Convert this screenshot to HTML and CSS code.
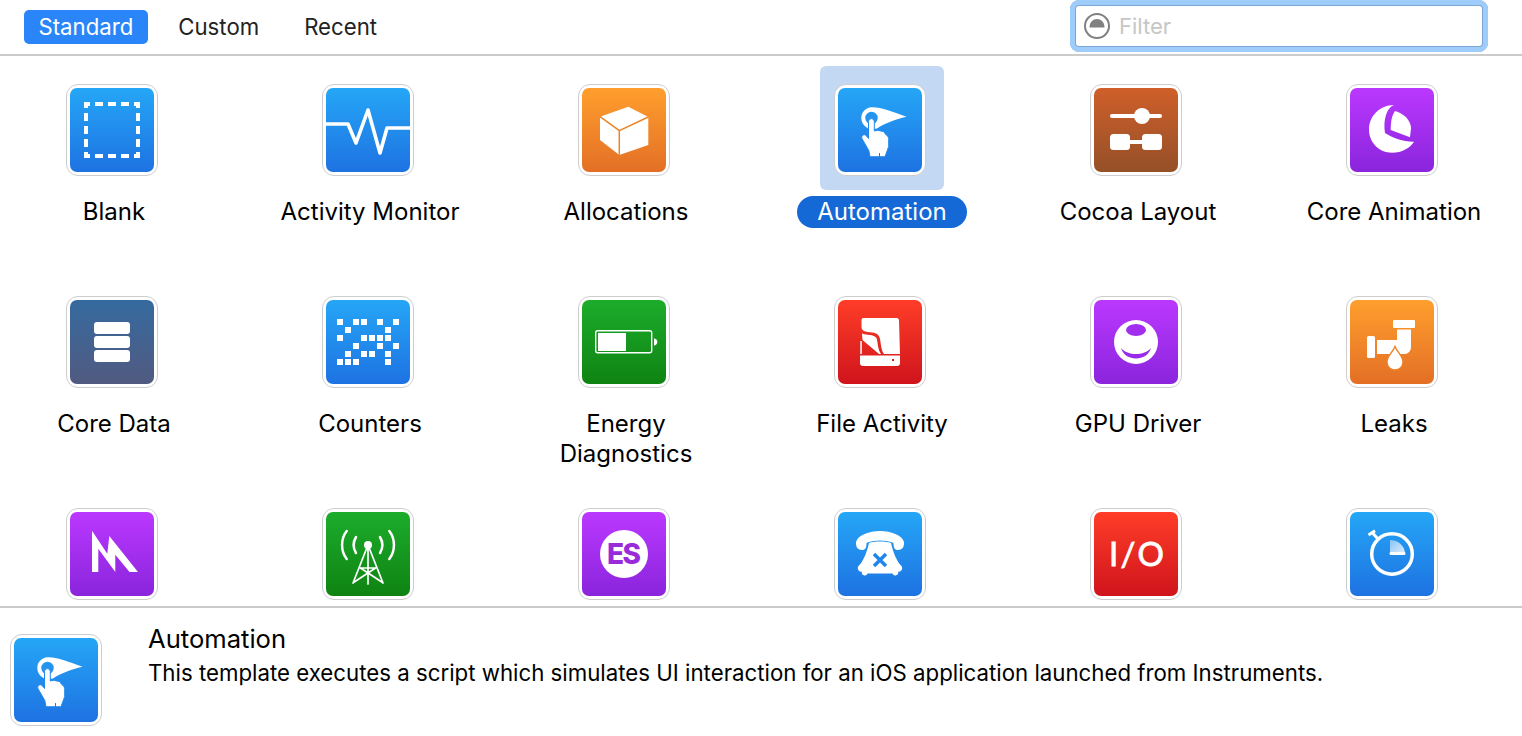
FILE: index.html
```html
<!DOCTYPE html>
<html lang="en">
<head>
<meta charset="utf-8">
<title>Instruments template chooser</title>
<link rel="stylesheet" href="styles.css">
</head>
<body>
<svg class="defs" width="0" height="0" aria-hidden="true">
  <symbol id="hand" viewBox="0 0 84 84">
    <path fill="#fff" fill-rule="evenodd" d="M33.500 19.300C43 19 55 24 68.500 28.700C57 31.500 47 35 39 40.500L34 41C28 41 23.300 36 23.300 30C23.300 24 28 19.500 33.500 19.300ZM33.500 23.800a6.200 6.200 0 1 0 0 12.400a6.200 6.200 0 1 0 0-12.400Z"/>
    <path fill="#fff" stroke="#1f8aee" stroke-width="1" d="M30.500 33.500a2.900 2.900 0 0 1 5.800 0V43l3.500-.8l3 .8l3 .5l1.500 2.500l2.700 2.500l.7 2V58.500L47 68.700H32L30.800 62.500L23.800 50.300c-.6-2 .8-3.600 2.600-3.600c1.600 0 4.100 3.800 4.100 3.800Z"/>
    <path stroke="#1f7ee8" stroke-width="1" d="M41.500 65V69"/>
  </symbol>
</svg>

<header class="toolbar">
  <nav class="tabs">
    <span class="tab tab-active">Standard</span>
    <span class="tab">Custom</span>
    <span class="tab">Recent</span>
  </nav>
  <div class="filter">
    <svg class="filter-icon" viewBox="0 0 28 28"><circle cx="14" cy="14" r="12" fill="none" stroke="#808080" stroke-width="2"/><path d="M6.500 15.500C6.500 10 10 7 14 7C18 7 21.500 10 21.500 15.500Z" fill="#808080"/></svg>
    <span class="filter-text">Filter</span>
  </div>
</header>

<main class="list">
  <div class="grid">
    <div class="cell"><div class="tile"><div class="icon"><div class="face blue">
      <svg viewBox="0 0 84 84"><rect x="16" y="16" width="52" height="52" fill="none" stroke="#fff" stroke-width="4" stroke-dasharray="8 5" stroke-dashoffset="4"/></svg>
    </div></div></div><div class="label">Blank</div></div>

    <div class="cell"><div class="tile"><div class="icon"><div class="face blue">
      <svg viewBox="0 0 84 84"><path d="M0 36H22L30 55L42 22L54 65L61 40H84" fill="none" stroke="#fff" stroke-width="3.600" stroke-linejoin="round" stroke-linecap="round"/></svg>
    </div></div></div><div class="label">Activity Monitor</div></div>

    <div class="cell"><div class="tile"><div class="icon"><div class="face orange">
      <svg viewBox="0 0 84 84"><path d="M46.300 18.700L66.300 29V57L37.300 67L18 52V28.700Z" fill="#fff"/><path d="M18 28.700L37.300 42.700L66.300 29M37.300 42.700V67" fill="none" stroke="#ea8427" stroke-width="1.500"/></svg>
    </div></div></div><div class="label">Allocations</div></div>

    <div class="cell"><div class="tile tile-selected"><div class="icon"><div class="face blue">
      <svg viewBox="0 0 84 84"><use href="#hand"/></svg>
    </div></div></div><div class="label label-selected">Automation</div></div>

    <div class="cell"><div class="tile"><div class="icon"><div class="face brown">
      <svg viewBox="0 0 84 84"><rect x="16" y="26" width="52" height="4" rx="2" fill="#fff"/><circle cx="48" cy="28" r="8" fill="#fff"/><rect x="16" y="46" width="20" height="16" rx="3.500" fill="#fff"/><rect x="48" y="46" width="20" height="16" rx="3.500" fill="#fff"/><rect x="36" y="52" width="12" height="4" fill="#fff"/></svg>
    </div></div></div><div class="label">Cocoa Layout</div></div>

    <div class="cell"><div class="tile"><div class="icon"><div class="face purple">
      <svg viewBox="0 0 84 84"><path fill="#fff" d="M44 17C36 20 33 33 35 45C43 50 54 54 64 53.700C60 60 52 64.700 42 64.700C29 64.700 19 54.500 19 41.500C19 28 30 17 44 17Z"/><path fill="#fff" d="M45 23C53 25 61 32 61 40.300L60 49.300L40.700 42C40.700 35 41.500 28 45 23Z"/></svg>
    </div></div></div><div class="label">Core Animation</div></div>

    <div class="cell"><div class="tile"><div class="icon"><div class="face navy">
      <svg viewBox="0 0 84 84"><rect x="24" y="22" width="36" height="12" rx="3" fill="#fff"/><rect x="24" y="36" width="36" height="12" rx="3" fill="#fff"/><rect x="24" y="50" width="36" height="12" rx="3" fill="#fff"/></svg>
    </div></div></div><div class="label">Core Data</div></div>

    <div class="cell"><div class="tile"><div class="icon"><div class="face blue">
      <svg viewBox="0 0 84 84" fill="#fff">
        <rect x="11" y="19" width="6" height="6"/><rect x="27" y="19" width="6" height="6"/><rect x="35" y="19" width="6" height="6"/><rect x="51" y="19" width="6" height="6"/><rect x="67" y="19" width="6" height="6"/>
        <rect x="19" y="27" width="6" height="6"/><rect x="59" y="27" width="6" height="6"/>
        <rect x="11" y="35" width="6" height="6"/><rect x="35" y="35" width="6" height="6"/><rect x="43" y="35" width="6" height="6"/><rect x="51" y="35" width="6" height="6"/><rect x="59" y="35" width="6" height="6"/>
        <rect x="27" y="43" width="6" height="6"/><rect x="51" y="43" width="6" height="6"/><rect x="67" y="43" width="6" height="6"/>
        <rect x="19" y="51" width="6" height="6"/><rect x="35" y="51" width="6" height="6"/><rect x="43" y="51" width="6" height="6"/><rect x="59" y="51" width="6" height="6"/>
        <rect x="11" y="59" width="6" height="6"/><rect x="19" y="59" width="6" height="6"/><rect x="27" y="59" width="6" height="6"/><rect x="59" y="59" width="6" height="6"/>
      </svg>
    </div></div></div><div class="label">Counters</div></div>

    <div class="cell"><div class="tile"><div class="icon"><div class="face green">
      <svg viewBox="0 0 84 84"><rect x="13.700" y="30.700" width="56" height="22" rx="2" fill="none" stroke="#fff" stroke-width="1.400"/><rect x="16" y="33" width="28" height="18" fill="#fff"/><path d="M72 38.300C74.500 39 75.300 40.500 75.300 42C75.300 43.500 74.500 45 72 45.700Z" fill="#fff"/></svg>
    </div></div></div><div class="label">Energy Diagnostics</div></div>

    <div class="cell"><div class="tile"><div class="icon"><div class="face red">
      <svg viewBox="0 0 84 84">
        <path fill="#fff" d="M25.500 18H58.500A2.500 2.500 0 0 1 61 20.500L62 54H46C43 50 43 44 42 39C41 33 36 32.500 30 32C26 31.700 23.500 30 23.500 27V20A2 2 0 0 1 25.500 18Z"/>
        <path fill="#fff" d="M24 33.500C28 35.500 36 34 38.500 38C40 42 39.500 49 43 54H41L24.500 40Z"/>
        <rect x="22.300" y="41" width="1.500" height="13" fill="#fff"/>
        <path fill="#fff" d="M22 55.500H62V63A3 3 0 0 1 59 66H25A3 3 0 0 1 22 63Z"/>
        <rect x="54" y="59" width="2" height="2" fill="#d81e20"/>
      </svg>
    </div></div></div><div class="label">File Activity</div></div>

    <div class="cell"><div class="tile"><div class="icon"><div class="face purple">
      <svg viewBox="0 0 84 84"><circle cx="42" cy="42" r="22" fill="#fff"/><ellipse cx="42" cy="30" rx="10" ry="6" fill="#a22ff0"/><path d="M27 48C31 62 53 62 57 48C50 56 34 56 27 48Z" fill="#9a2be8"/></svg>
    </div></div></div><div class="label">GPU Driver</div></div>

    <div class="cell"><div class="tile"><div class="icon"><div class="face orange">
      <svg viewBox="0 0 84 84"><rect x="43" y="20" width="22" height="8" rx="1" fill="#fff"/><path d="M47 29.500H61V47C61 51 58 54 55 54H27V40H47Z" fill="#fff"/><rect x="17" y="36" width="8" height="22" rx="1.500" fill="#fff"/><path d="M45 46.500C47 52 53 56 53 62C53 66.500 49.500 70 45 70C40.500 70 37 66.500 37 62C37 56 43 52 45 46.500Z" fill="#fff" stroke="#ec8228" stroke-width="1.400"/></svg>
    </div></div></div><div class="label">Leaks</div></div>

    <div class="cell"><div class="tile"><div class="icon"><div class="face purple">
      <svg viewBox="0 0 84 84"><path d="M22 18.700L37.300 41.700L39.300 24L68 60H59.500L45.300 42.700V60L28.300 36.700V60H22Z" fill="#fff"/></svg>
    </div></div></div></div>

    <div class="cell"><div class="tile"><div class="icon"><div class="face green">
      <svg viewBox="0 0 84 84"><circle cx="42" cy="33" r="4" fill="#fff"/><path d="M42 33L27 71M42 33L57 71M42 33V72M34.500 56H49.500M34.500 56L56.500 70.500M49.500 56L27.500 70.500" fill="none" stroke="#fff" stroke-width="1.700" stroke-linecap="round"/><path d="M30 25C27 30 27 36 30 41M54 25C57 30 57 36 54 41M20.700 19C14.500 27 14.500 39 20.700 47M63.300 19C69.500 27 69.500 39 63.300 47" fill="none" stroke="#fff" stroke-width="2.500" stroke-linecap="round"/></svg>
    </div></div></div></div>

    <div class="cell"><div class="tile"><div class="icon"><div class="face purple">
      <svg viewBox="0 0 84 84"><circle cx="42" cy="42" r="24" fill="#fff"/><text class="es-text" x="42" y="52" text-anchor="middle" textLength="34">ES</text></svg>
    </div></div></div></div>

    <div class="cell"><div class="tile"><div class="icon"><div class="face blue">
      <svg viewBox="0 0 84 84"><path fill="#fff" d="M18 30C20 23 31 19 42 19C53 19 64 23 66 30C66.500 35 64 38 60 38C56.500 38 55.500 35.500 55.500 31C50 27.500 34 27.500 28.500 31C28.500 35.500 27.500 38 24 38C20 38 17.500 35 18 30Z"/><path fill="#fff" d="M31 31C36 29 48 29 53 31C55 40 59 50 63.500 54C65 56 64 59.500 61 59.700H60A2.800 2.800 0 0 1 54.500 61.500H29.500A2.800 2.800 0 0 1 24 59.700H23C20 59.500 19 56 20.500 54C25 50 29 40 31 31Z"/><path d="M36 42L48 54M48 42L36 54" stroke="#1f86ec" stroke-width="3.500" fill="none"/></svg>
    </div></div></div></div>

    <div class="cell"><div class="tile"><div class="icon"><div class="face red">
      <svg viewBox="0 0 84 84"><text class="io-text" x="15" y="54" textLength="55" lengthAdjust="spacing">I/O</text></svg>
    </div></div></div></div>

    <div class="cell"><div class="tile"><div class="icon"><div class="face blue">
      <svg viewBox="0 0 84 84"><defs><linearGradient id="sector" x1="0" y1="0" x2="1" y2="1"><stop offset="0" stop-color="#fff" stop-opacity=".45"/><stop offset="1" stop-color="#fff" stop-opacity=".85"/></linearGradient></defs><circle cx="42" cy="42" r="20.300" fill="none" stroke="#fff" stroke-width="3.500"/><path d="M40 28A15 14 0 0 1 55 41H40Z" fill="url(#sector)"/><path d="M41 41.500H54" stroke="#fff" stroke-width="3" stroke-linecap="round"/><path d="M28 27L23 21.500M18.500 23L25 18.800" stroke="#fff" stroke-width="3" fill="none"/></svg>
    </div></div></div></div>
  </div>
</main>

<footer class="details">
  <div class="icon"><div class="face blue">
    <svg viewBox="0 0 84 84"><use href="#hand"/></svg>
  </div></div>
  <div class="details-text">
    <div class="details-title">Automation</div>
    <div class="details-desc">This template executes a script which simulates UI interaction for an iOS application launched from Instruments.</div>
  </div>
</footer>
</body>
</html>
```

FILE: styles.css
```css
* { box-sizing: border-box; }

html, body {
  margin: 0;
  height: 736px;
  overflow: hidden;
  background: #fff;
}

body {
  display: flex;
  flex-direction: column;
  font-family: "Inter", "Liberation Sans", sans-serif;
  font-size: 24px;
  color: #000;
}

.defs { position: absolute; }

.toolbar {
  height: 56px;
  flex: none;
  display: flex;
  justify-content: space-between;
  border-bottom: 2px solid #cbcbcb;
  padding-left: 24px;
  padding-right: 34px;
}

.tabs {
  display: flex;
  align-items: center;
  height: 54px;
  gap: 16px;
}

.tab {
  height: 34px;
  line-height: 34px;
  padding: 0 14.5px;
  border-radius: 5px;
  color: #222;
  font-size: 22.2px;
}

.tab-active {
  background: #2a86f8;
  color: #fff;
}

.filter {
  width: 418px;
  height: 52px;
  border-radius: 9px;
  background: #fff;
  display: flex;
  align-items: center;
  padding-left: 13px;
  gap: 8px;
  box-shadow: inset 0 0 0 5px #9fcdfb, inset 0 0 0 6px #7ea6d2;
}

.filter-icon { width: 28px; height: 28px; }

.filter-text { color: #c6c6c6; font-size: 22px; }

.list {
  flex: 1;
  overflow: hidden;
  border-bottom: 2px solid #cbcbcb;
}

.grid {
  display: grid;
  grid-template-columns: repeat(6, 256px);
  grid-auto-rows: 212px;
  margin-left: -14px;
}

.cell {
  display: flex;
  flex-direction: column;
  align-items: center;
  padding-top: 10px;
}

.tile {
  width: 124px;
  height: 124px;
  padding: 18px 18px 14px 14px;
  border-radius: 6px;
  flex: none;
}

.tile-selected { background: #c3d9f3; }

.icon {
  width: 92px;
  height: 92px;
  flex: none;
  padding: 3px;
  border: 1px solid #cdcdcd;
  border-radius: 12px;
  background: #fff;
}

.face {
  width: 84px;
  height: 84px;
  border-radius: 7px;
  overflow: hidden;
}

.face svg { display: block; width: 84px; height: 84px; }

.blue { background: linear-gradient(#25a6f6, #1e72e2); }
.orange { background: linear-gradient(#ff9f2e, #e36f25); }
.brown { background: linear-gradient(#cf5f2a, #955028); }
.purple { background: linear-gradient(#bb38ff, #8a25dc); }
.navy { background: linear-gradient(#356a9f, #515a80); }
.green { background: linear-gradient(#1cad2c, #0f8312); }
.red { background: linear-gradient(#ff3d28, #cf141c); }

.label {
  margin-top: 6px;
  padding: 1px 20px;
  line-height: 30px;
  text-align: center;
  max-width: 240px;
}

.label-selected {
  background: #1469d6;
  color: #fff;
  border-radius: 16px;
}

.es-text {
  font-family: "Inter", sans-serif;
  font-weight: 800;
  font-size: 28px;
  fill: #9a2bd9;
}

.io-text {
  font-family: "Lato", sans-serif;
  font-size: 33px;
  fill: #fff;
  stroke: #fff;
  stroke-width: 0.8px;
}

.details {
  height: 128px;
  flex: none;
  display: flex;
  gap: 47px;
  padding: 26px 0 0 10px;
}

.details-text {
  margin-top: -12px;
  margin-left: -1px;
}

.details-title {
  font-size: 25.6px;
  line-height: 34px;
}

.details-desc {
  font-size: 22.25px;
  line-height: 33px;
}
```
